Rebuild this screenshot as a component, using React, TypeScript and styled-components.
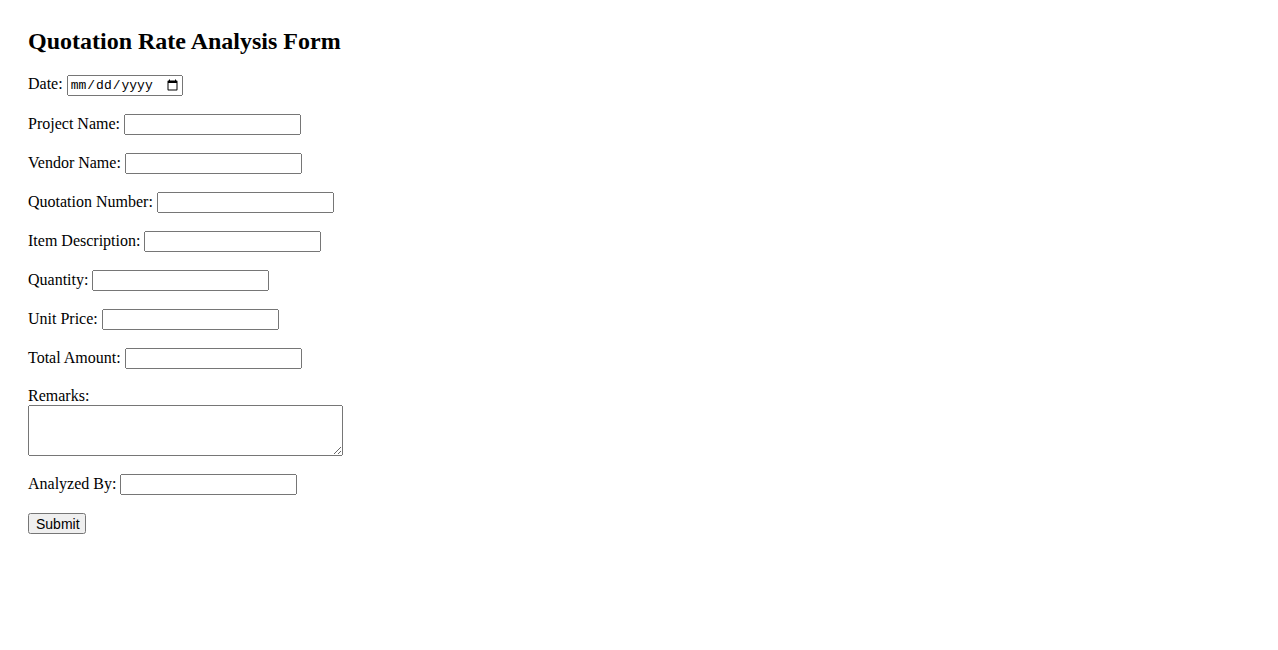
import React from "react";
import styled, {createGlobalStyle} from "styled-components";

const GlobalStyle = createGlobalStyle`
  body {
    margin: 0;
    background: #fff;
    color: #000;
    font-family: "Liberation Serif", "Times New Roman", serif;
  }
`;

const Page = styled.div`
  padding: 28px 28px;
`;

const Title = styled.h2`
  margin: 0 0 20px;
  font-size: 24px;
  font-weight: bold;
`;

const QuoteForm = styled.form`
  display: flex;
  flex-direction: column;
  align-items: flex-start;
`;

const Field = styled.div`
  font-size: 16px;
  margin-bottom: 18px;
`;

const Label = styled.label`
  margin-right: 4px;
`;

const TextInput = styled.input`
  box-sizing: border-box;
  width: 177px;
  height: 21px;
  font-family: "Liberation Sans", Arial, sans-serif;
  font-size: 13.33px;
`;

const DateInput = styled(TextInput)`
  width: 116px;
  font-family: "Liberation Mono", "DejaVu Sans Mono", monospace;
  font-size: 13px;
`;

const RemarksBox = styled.textarea`
  display: block;
  width: 309px;
  height: 45px;
  font-family: "Liberation Mono", monospace;
  font-size: 13.33px;
`;

const SubmitButton = styled.button`
  box-sizing: border-box;
  width: 58px;
  height: 21px;
  font-family: "Liberation Sans", Arial, sans-serif;
  font-size: 14px;
`;

const fields = [
    {id: "projectName", label: "Project Name:"},
    {id: "vendorName", label: "Vendor Name:"},
    {id: "quotationNumber", label: "Quotation Number:"},
    {id: "itemDescription", label: "Item Description:"},
    {id: "quantity", label: "Quantity:"},
    {id: "unitPrice", label: "Unit Price:"},
    {id: "totalAmount", label: "Total Amount:"},
];

const App: React.FC = () => {
    return (
        <Page>
            <GlobalStyle/>
            <Title>Quotation Rate Analysis Form</Title>
            <QuoteForm onSubmit={e => e.preventDefault()}>
                <Field>
                    <Label htmlFor="date">Date:</Label>
                    <DateInput type="date" id="date"/>
                </Field>
                {fields.map(f => (
                    <Field key={f.id}>
                        <Label htmlFor={f.id}>{f.label}</Label>
                        <TextInput type="text" id={f.id}/>
                    </Field>
                ))}
                <Field>
                    <Label htmlFor="remarks">Remarks:</Label>
                    <RemarksBox id="remarks"/>
                </Field>
                <Field>
                    <Label htmlFor="analyzedBy">Analyzed By:</Label>
                    <TextInput type="text" id="analyzedBy"/>
                </Field>
                <SubmitButton type="submit">Submit</SubmitButton>
            </QuoteForm>
        </Page>
    );
};

export default App;
